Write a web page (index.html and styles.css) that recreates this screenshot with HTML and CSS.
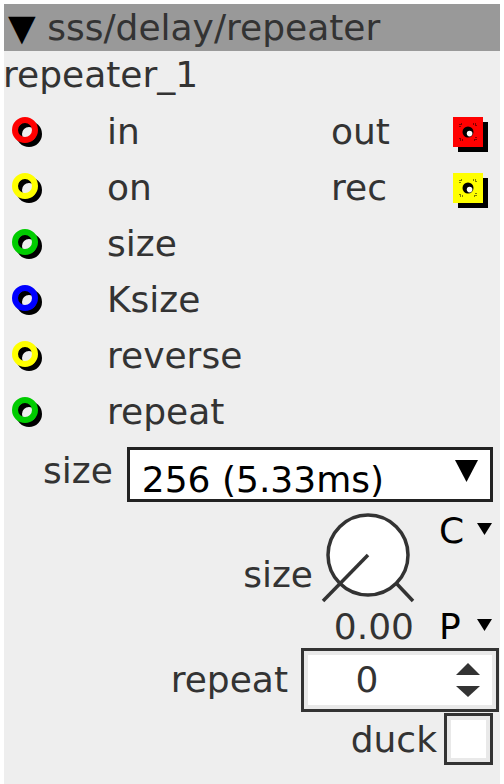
FILE: index.html
```html
<!DOCTYPE html>
<html lang="en">
<head>
  <meta charset="UTF-8">
  <title>sss/delay/repeater</title>
  <link rel="stylesheet" href="styles.css">
</head>
<body>

  <div class="object">
    <div class="title"><span class="collapse">▼</span> sss/delay/repeater</div>
    <div class="instance">repeater_1</div>

    <!-- inlets / outlets -->
    <div class="io-row">
      <svg class="inlet" width="30" height="30"><circle cx="17" cy="17" r="10" class="ring-shadow"/><circle cx="13" cy="13" r="10" stroke="#ff0000" class="ring"/></svg>
      <span>in</span>
      <span>out</span>
      <svg class="outlet" width="36" height="36">
        <rect x="5" y="5" width="30" height="30" fill="#000"/>
        <rect x="0" y="0" width="30" height="30" fill="#ff0000"/>
        <path class="corners" d="M7 10V7H10M20 7H23V10M23 20V23H20M10 23H7V20"/>
        <circle cx="15" cy="15" r="5.5" fill="#000"/>
        <circle cx="16.6" cy="16.6" r="2.8" fill="#fff"/>
      </svg>
    </div>
    <div class="io-row">
      <svg class="inlet" width="30" height="30"><circle cx="17" cy="17" r="10" class="ring-shadow"/><circle cx="13" cy="13" r="10" stroke="#ffff00" class="ring"/></svg>
      <span>on</span>
      <span>rec</span>
      <svg class="outlet" width="36" height="36">
        <rect x="5" y="5" width="30" height="30" fill="#000"/>
        <rect x="0" y="0" width="30" height="30" fill="#ffff00"/>
        <path class="corners" d="M7 10V7H10M20 7H23V10M23 20V23H20M10 23H7V20"/>
        <circle cx="15" cy="15" r="5.5" fill="#000"/>
        <circle cx="16.6" cy="16.6" r="2.8" fill="#fff"/>
      </svg>
    </div>
    <div class="io-row">
      <svg class="inlet" width="30" height="30"><circle cx="17" cy="17" r="10" class="ring-shadow"/><circle cx="13" cy="13" r="10" stroke="#00cc00" class="ring"/></svg>
      <span>size</span>
    </div>
    <div class="io-row">
      <svg class="inlet" width="30" height="30"><circle cx="17" cy="17" r="10" class="ring-shadow"/><circle cx="13" cy="13" r="10" stroke="#0000ff" class="ring"/></svg>
      <span>Ksize</span>
    </div>
    <div class="io-row">
      <svg class="inlet" width="30" height="30"><circle cx="17" cy="17" r="10" class="ring-shadow"/><circle cx="13" cy="13" r="10" stroke="#ffff00" class="ring"/></svg>
      <span>reverse</span>
    </div>
    <div class="io-row">
      <svg class="inlet" width="30" height="30"><circle cx="17" cy="17" r="10" class="ring-shadow"/><circle cx="13" cy="13" r="10" stroke="#00cc00" class="ring"/></svg>
      <span>repeat</span>
    </div>

    <!-- parameters -->
    <div class="combo-row">
      <span class="combo-label">size</span>
      <div class="combo">
        <span>256 (5.33ms)</span>
        <svg class="combo-arrow" width="23" height="22"><polygon points="0,0 23,0 11.5,22"/></svg>
      </div>
    </div>

    <div class="knob-row">
      <span class="knob-label">size</span>
      <div class="knob-col">
        <svg class="knob" width="92" height="92">
          <circle cx="46" cy="44" r="40"/>
          <line x1="46" y1="44" x2="1" y2="90"/>
          <line x1="75" y1="73" x2="91" y2="90"/>
        </svg>
        <span class="knob-value">0.00</span>
      </div>
      <div class="knob-side">
        <div class="flag"><span>C</span><svg width="15" height="12"><polygon points="0,0 15,0 7.5,12"/></svg></div>
        <div class="flag"><span>P</span><svg width="15" height="12"><polygon points="0,0 15,0 7.5,12"/></svg></div>
      </div>
    </div>

    <div class="spin-row">
      <span class="spin-label">repeat</span>
      <div class="spinner">
        <span class="spin-value">0</span>
        <svg class="spin-arrows" width="24" height="35">
          <polygon points="12,0 24,12 0,12"/>
          <polygon points="0,23 24,23 12,34"/>
        </svg>
      </div>
    </div>

    <div class="check-row">
      <span class="check-label">duck</span>
      <div class="checkbox"></div>
    </div>
  </div>

</body>
</html>
```

FILE: styles.css
```css
/* General Styles */
* {
  margin: 0;
  padding: 0;
  box-sizing: border-box;
}

body {
  background-color: white;
  font-family: "DejaVu Sans", sans-serif;
  padding: 4px 4px 0 4px;
}

.object {
  width: 496px;
  min-height: 780px;
  background-color: #eeeeee;
  color: #333333;
  font-size: 36px;
}

.title {
  height: 47px;
  line-height: 47px;
  background-color: #999999;
  padding-left: 4px;
  white-space: nowrap;
}

.collapse {
  color: black;
}

.instance {
  line-height: 48px;
  margin-left: -1px;
  margin-bottom: 5px;
}

/* Inlets / outlets */
.io-row {
  display: grid;
  grid-template-columns: 103px 224px 122px 1fr;
  height: 56px;
  line-height: 56px;
}

.inlet {
  margin: 13px 0 0 8px;
}

.outlet {
  margin-top: 13px;
}

.ring,
.ring-shadow {
  fill: none;
  stroke-width: 6;
}

.ring-shadow {
  stroke: black;
}

.corners {
  fill: none;
  stroke: black;
  stroke-width: 1;
  stroke-dasharray: 1 1;
}

/* Combo box */
.combo-row {
  display: flex;
  padding: 7px 7px 0 39px;
}

.combo-label {
  line-height: 48px;
  margin-right: 14px;
}

.combo {
  width: 366px;
  height: 55px;
  border: 3px solid #222222;
  background-color: white;
  color: black;
  display: flex;
  justify-content: space-between;
  padding: 11px 12px 0 12px;
  line-height: 38px;
}

.combo-arrow {
  margin-top: -1px;
}

/* Knob */
.knob-row {
  display: flex;
  justify-content: flex-end;
  margin-top: 9px;
  padding-right: 8px;
}

.knob-label {
  line-height: 40px;
  margin: 44px 9px 0 0;
}

.knob-col {
  display: flex;
  flex-direction: column;
  align-items: flex-end;
}

.knob {
  overflow: visible;
}

.knob circle {
  fill: white;
  stroke: #333333;
  stroke-width: 3.5;
}

.knob line {
  stroke: #333333;
  stroke-width: 3.5;
}

.knob-value {
  line-height: 40px;
  margin-top: 4px;
}

.knob-side {
  width: 53px;
  margin-left: 25px;
  display: flex;
  flex-direction: column;
  justify-content: space-between;
}

.flag {
  display: flex;
  justify-content: space-between;
  line-height: 40px;
  color: black;
}

.flag svg {
  margin-top: 12px;
}

/* Number box */
.spin-row {
  display: flex;
  justify-content: flex-end;
  margin-top: 1px;
  padding-right: 1px;
}

.spin-label {
  line-height: 40px;
  margin: 12px 13px 0 0;
}

.spinner {
  width: 198px;
  height: 64px;
  border: 3px solid #333333;
  background-color: white;
  box-shadow: inset 0 0 0 4px #e9e9e9;
  display: flex;
  align-items: center;
}

.spin-value {
  width: 126px;
  text-align: center;
  line-height: 58px;
}

.spin-arrows {
  margin-left: 26px;
  fill: #333333;
}

/* Checkbox */
.check-row {
  display: flex;
  justify-content: flex-end;
  margin-top: 1px;
  padding-right: 7px;
}

.check-label {
  line-height: 40px;
  margin: 7px 7px 0 0;
}

.checkbox {
  width: 49px;
  height: 52px;
  border: 3px solid #333333;
  background-color: white;
  box-shadow: inset 0 0 0 4px #e9e9e9;
}
```
